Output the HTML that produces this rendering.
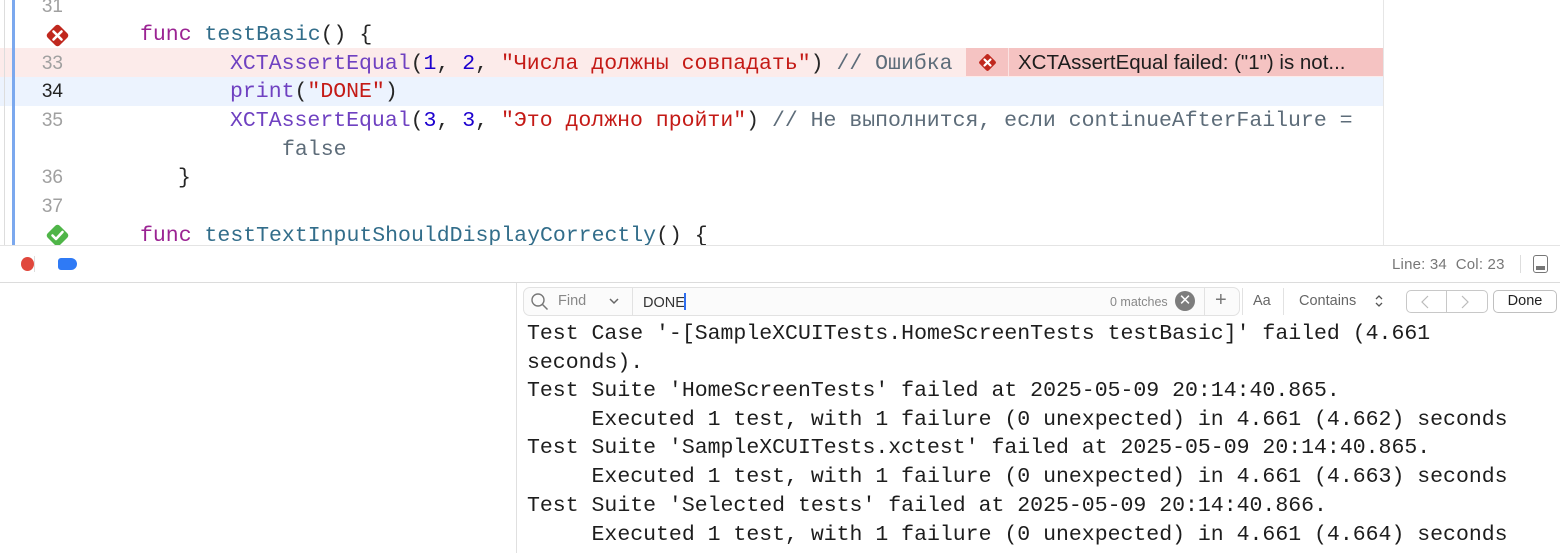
<!DOCTYPE html>
<html><head><meta charset="utf-8"><style>
*{margin:0;padding:0;box-sizing:border-box}
body{width:1560px;height:553px;overflow:hidden;background:#fff;position:relative;font-family:"Liberation Sans",sans-serif}
.mono{font-family:"Liberation Mono","DejaVu Sans Mono",monospace;font-size:21.5px;letter-spacing:0}
.ln{position:absolute;left:0;width:80px;text-align:right;color:#a0a0a0;font-size:19px;font-family:"Liberation Sans",sans-serif}
.code{position:absolute;white-space:pre;color:#262626}
.kw{color:#9b2393}.fn{color:#326d8a}.ty{color:#6f41c1}.num{color:#1c00cf}.str{color:#c41a16}.cm{color:#5d6c79}
.cl{position:absolute;left:527px;white-space:pre;color:#1d1d1d}
</style></head><body>
<div style="position:absolute;left:0;top:0;width:1383px;height:245px;background:#fff"></div>
<div style="position:absolute;left:0;top:48px;width:1383px;height:29px;background:#fcebea"></div>
<div style="position:absolute;left:0;top:77px;width:1383px;height:29px;background:#ecf3fe"></div>
<div style="position:absolute;left:4px;top:0;width:1px;height:245px;background:#ddd"></div>
<div style="position:absolute;left:12px;top:0;width:3px;height:245px;background:#7ba8ee"></div>
<div style="position:absolute;left:1383px;top:0;width:1px;height:245px;background:#e6e6e6"></div>

<div class="ln" style="top:-4px;left:-17px">31</div>
<div class="ln" style="top:53px;left:-17px">33</div>
<div class="ln" style="top:81px;left:-17px;color:#222">34</div>
<div class="ln" style="top:110px;left:-17px">35</div>
<div class="ln" style="top:167px;left:-17px">36</div>
<div class="ln" style="top:196px;left:-17px">37</div>

<svg style="position:absolute;left:45px;top:23px" width="25" height="25" viewBox="0 0 25 25"><rect x="4" y="4" width="17" height="17" rx="3" transform="rotate(45 12.5 12.5)" fill="#c0281e"/><path d="M8.5 8.5l8 8M16.5 8.5l-8 8" stroke="#fff" stroke-width="2.6" stroke-linecap="round"/></svg>
<svg style="position:absolute;left:45px;top:223px" width="25" height="25" viewBox="0 0 25 25"><rect x="4" y="4" width="17" height="17" rx="3" transform="rotate(45 12.5 12.5)" fill="#4fb548"/><path d="M7.5 12.5l3.5 3.5 6.5-7" stroke="#fff" stroke-width="2.6" fill="none" stroke-linecap="round" stroke-linejoin="round"/></svg>

<div class="code mono" style="left:140px;top:23px"><span class="kw">func</span> <span class="fn">testBasic</span>() {</div>
<div class="code mono" style="left:230px;top:52px"><span class="ty">XCTAssertEqual</span>(<span class="num">1</span>, <span class="num">2</span>, <span class="str">"Числа должны совпадать"</span>) <span class="cm">// Ошибка</span></div>
<div class="code mono" style="left:230px;top:80px"><span class="ty">print</span>(<span class="str">"DONE"</span>)</div>
<div class="code mono" style="left:230px;top:109px"><span class="ty">XCTAssertEqual</span>(<span class="num">3</span>, <span class="num">3</span>, <span class="str">"Это должно пройти"</span>) <span class="cm">// Не выполнится, если continueAfterFailure =</span></div>
<div class="code mono" style="left:282px;top:138px"><span class="cm">false</span></div>
<div class="code mono" style="left:178px;top:166px">}</div>
<div class="code mono" style="left:140px;top:224px"><span class="kw">func</span> <span class="fn">testTextInputShouldDisplayCorrectly</span>() {</div>

<div style="position:absolute;left:966px;top:48px;width:417px;height:28px;background:#f5c3c2"></div>
<div style="position:absolute;left:1008px;top:48px;width:1px;height:28px;background:#fbe3e2"></div>
<svg style="position:absolute;left:977px;top:52px" width="21" height="21" viewBox="0 0 21 21"><rect x="4" y="4" width="13" height="13" rx="2" transform="rotate(45 10.5 10.5)" fill="#c0281e"/><path d="M7.5 7.5l6 6M13.5 7.5l-6 6" stroke="#fff" stroke-width="2.2" stroke-linecap="round"/></svg>
<div style="position:absolute;left:1018px;top:51px;font-size:20.5px;color:#1d1d1d;white-space:nowrap">XCTAssertEqual failed: ("1") is not...</div>

<div style="position:absolute;left:0;top:245px;width:1560px;height:38px;background:#fff;border-top:1px solid #e4e4e4;border-bottom:1px solid #dcdcdc"></div>
<div style="position:absolute;left:21px;top:257px;width:13px;height:14px;border-radius:50%;background:#e0473c"></div>
<div style="position:absolute;left:34px;top:256px;width:1px;height:16px;background:#ddd"></div>
<div style="position:absolute;left:58px;top:258px;width:19px;height:12px;border-radius:3px 6px 6px 3px;background:#2f7af5"></div>
<div style="position:absolute;left:1392px;top:256px;font-size:15px;color:#777;white-space:nowrap;letter-spacing:.2px">Line: 34&nbsp; Col: 23</div>
<div style="position:absolute;left:1520px;top:255px;width:1px;height:18px;background:#ddd"></div>
<div style="position:absolute;left:1533px;top:255px;width:15px;height:18px;border:1.5px solid #777;border-radius:3px"></div>
<div style="position:absolute;left:1536px;top:266px;width:9px;height:4px;background:#777"></div>

<div style="position:absolute;left:516px;top:283px;width:1px;height:270px;background:#e0e0e0"></div>
<div style="position:absolute;left:523px;top:287px;width:717px;height:29px;border:1px solid #e2e2e2;border-radius:7px;background:#fbfbfb"></div>
<svg style="position:absolute;left:530px;top:292px" width="20" height="20" viewBox="0 0 20 20"><circle cx="8" cy="8" r="6" stroke="#777" stroke-width="1.4" fill="none"/><path d="M12.5 12.5l5 5" stroke="#777" stroke-width="1.5"/></svg>
<div style="position:absolute;left:558px;top:293px;font-size:14.5px;color:#888">Find</div>
<svg style="position:absolute;left:608px;top:296px" width="12" height="10"><path d="M2 3l4 4 4-4" stroke="#666" stroke-width="1.5" fill="none"/></svg>
<div style="position:absolute;left:632px;top:288px;width:1px;height:27px;background:#e2e2e2"></div>
<div style="position:absolute;left:643px;top:293px;font-size:14.5px;color:#333">DONE<span style="display:inline-block;width:2px;height:17px;background:#2f6ff0;vertical-align:-3px;margin-left:-1px"></span></div>
<div style="position:absolute;left:1110px;top:295px;font-size:12.5px;color:#888">0 matches</div>
<div style="position:absolute;left:1175px;top:291px;width:20px;height:20px;border-radius:50%;background:#7d7d7d;color:#fff;font-size:15px;line-height:20px;text-align:center">✕</div>
<div style="position:absolute;left:1204px;top:288px;width:1px;height:27px;background:#e2e2e2"></div>
<div style="position:absolute;left:1215px;top:289px;font-size:20px;color:#777">+</div>
<div style="position:absolute;left:1242px;top:288px;width:1px;height:27px;background:#e2e2e2"></div>
<div style="position:absolute;left:1253px;top:293px;font-size:14.5px;color:#666">Aa</div>
<div style="position:absolute;left:1283px;top:288px;width:1px;height:27px;background:#e2e2e2"></div>
<div style="position:absolute;left:1299px;top:293px;font-size:14.5px;color:#666">Contains</div>
<svg style="position:absolute;left:1374px;top:293px" width="10" height="16"><path d="M2 6l3-3 3 3M2 10l3 3 3-3" stroke="#555" stroke-width="1.3" fill="none"/></svg>
<div style="position:absolute;left:1406px;top:290px;width:82px;height:23px;border:1px solid #c8c8c8;border-radius:5px"></div>
<div style="position:absolute;left:1446px;top:290px;width:1px;height:23px;background:#c8c8c8"></div>
<svg style="position:absolute;left:1420px;top:294px" width="60" height="16"><path d="M8 2l-6 6 6 6M42 2l6 6-6 6" stroke="#bbb" stroke-width="1.2" fill="none"/></svg>
<div style="position:absolute;left:1493px;top:290px;width:64px;height:23px;border:1px solid #c0c0c0;border-radius:5px;font-size:14.5px;color:#222;text-align:center;line-height:21px">Done</div>

<div class="cl mono" style="top:322px">Test Case '-[SampleXCUITests.HomeScreenTests testBasic]' failed (4.661</div>
<div class="cl mono" style="top:351px">seconds).</div>
<div class="cl mono" style="top:379px">Test Suite 'HomeScreenTests' failed at 2025-05-09 20:14:40.865.</div>
<div class="cl mono" style="top:408px">     Executed 1 test, with 1 failure (0 unexpected) in 4.661 (4.662) seconds</div>
<div class="cl mono" style="top:436px">Test Suite 'SampleXCUITests.xctest' failed at 2025-05-09 20:14:40.865.</div>
<div class="cl mono" style="top:465px">     Executed 1 test, with 1 failure (0 unexpected) in 4.661 (4.663) seconds</div>
<div class="cl mono" style="top:494px">Test Suite 'Selected tests' failed at 2025-05-09 20:14:40.866.</div>
<div class="cl mono" style="top:523px">     Executed 1 test, with 1 failure (0 unexpected) in 4.661 (4.664) seconds</div>
</body></html>
